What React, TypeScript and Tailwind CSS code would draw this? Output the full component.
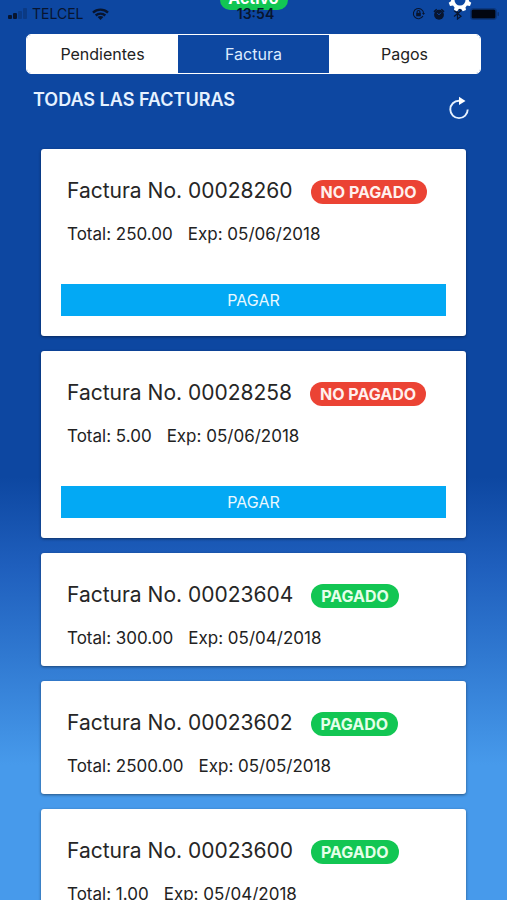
import { useState } from "react";

type Invoice = { id: string; total: string; exp: string; paid: boolean };

const invoices: Invoice[] = [
  { id: "00028260", total: "250.00", exp: "05/06/2018", paid: false },
  { id: "00028258", total: "5.00", exp: "05/06/2018", paid: false },
  { id: "00023604", total: "300.00", exp: "05/04/2018", paid: true },
  { id: "00023602", total: "2500.00", exp: "05/05/2018", paid: true },
  { id: "00023600", total: "1.00", exp: "05/04/2018", paid: true },
];

const tabs = ["Pendientes", "Factura", "Pagos"];

function WifiIcon() {
  return (
    <svg viewBox="0 0 17 12" className="h-3 w-[17px]" fill="none" stroke="currentColor" strokeWidth="2.4" aria-hidden="true">
      <path d="M1 4.600C5.200.6 11.800.6 16 4.600" />
      <path d="M3.700 7.500C6.400 5 10.600 5 13.300 7.500" />
      <path d="M5.600 9L8.500 12L11.400 9C9.800 7.600 7.200 7.600 5.600 9Z" fill="currentColor" stroke="none" />
    </svg>
  );
}

function GearIcon() {
  return (
    <svg viewBox="0 0 24 24" className="h-6 w-6" aria-hidden="true">
      <g fill="#fff">
        {[22.5, 67.5, 112.5, 157.5].map((angle) => (
          <path key={angle} d="M9.600 3.500L10.300 0.500H13.700L14.400 3.500V20.500L13.700 23.500H10.300L9.600 20.500Z" transform={`rotate(${angle} 12 12)`} />
        ))}
        <circle cx="12" cy="12" r="9" />
      </g>
      <circle cx="12" cy="12" r="5.500" fill="#0d47a1" />
    </svg>
  );
}

function StatusBar() {
  return (
    <div className="relative grid h-[27px] grid-cols-3 items-center pl-2 pr-2 text-sm leading-4 text-[#08152f]">
      <div className="flex items-center gap-1">
        <svg viewBox="0 0 20 11" className="h-[11px] w-5" fill="currentColor" aria-hidden="true">
          <rect x="0" y="7" width="4" height="4" rx="1" />
          <rect x="5" y="5" width="4" height="6" rx="1" />
          <rect x="10" y="3" width="4" height="8" rx="1" opacity=".25" />
          <rect x="15" y="0" width="4" height="11" rx="1" opacity=".25" />
        </svg>
        <span>TELCEL</span>
        <span className="pl-1"><WifiIcon /></span>
      </div>
      <span className="absolute left-1/2 top-0 flex h-[10px] w-[68px] -translate-x-1/2 items-end justify-center overflow-hidden rounded-b-full bg-[#12c653] text-base font-bold leading-6 text-white">
        Activo
      </span>
      <time className="relative col-start-2 pl-1 text-center font-semibold">13:54</time>
      <div className="relative flex items-center justify-end gap-2">
        <svg viewBox="0 0 14 14" className="h-[13px] w-[13px]" fill="none" stroke="currentColor" strokeWidth="1.200" aria-hidden="true">
          <path d="M11.800 9.800A5.500 5.500 0 1 1 12.500 7" />
          <path d="M10.800 6.500H14L12.400 8.700Z" fill="currentColor" stroke="none" />
          <rect x="4.500" y="6.300" width="5" height="3.700" fill="currentColor" stroke="none" />
          <path d="M5.500 6.500V5.200A1.500 1.500 0 0 1 8.500 5.200V6.500" />
        </svg>
        <svg viewBox="0 0 13 13" className="h-3 w-3" aria-hidden="true">
          <g fill="currentColor">
            <circle cx="6.500" cy="7.300" r="5.300" />
            <path d="M0.500 3.500L3.500 0.800L4.500 2L1.500 4.700ZM12.500 3.500L9.500 0.800L8.500 2L11.500 4.700Z" />
          </g>
          <path d="M4.500 5.500L6.500 7.500L8.700 5" fill="none" stroke="#0d47a1" />
        </svg>
        <svg viewBox="0 0 9 13" className="h-[13px] w-[9px]" fill="none" stroke="currentColor" strokeWidth="1.300" aria-hidden="true">
          <path d="M1 3.500L8 9.300L4.500 12V1L8 3.700L1 9.500" />
        </svg>
        <svg viewBox="0 0 29 12" className="h-3 w-[29px]" aria-hidden="true">
          <rect x="0.500" y="0.500" width="26" height="11" rx="2.500" fill="none" stroke="currentColor" opacity=".3" />
          <rect x="1.500" y="1.500" width="24" height="9" rx="1.500" fill="#020610" />
          <rect x="27.500" y="4" width="1.500" height="4" rx=".7" fill="currentColor" opacity=".4" />
        </svg>
      </div>
      <button type="button" aria-label="Ajustes" className="absolute -top-3 right-[35px]">
        <GearIcon />
      </button>
    </div>
  );
}

function InvoiceCard({ invoice }: { invoice: Invoice }) {
  return (
    <article
      className={`shrink-0 rounded-[3px] bg-white px-5 pt-7 shadow-[0_1px_3px_rgba(0,0,0,0.45)] ${invoice.paid ? "pb-4" : "pb-5"}`}
    >
      <div className="flex items-center gap-[18px] pl-[6px]">
        <h2 className="whitespace-nowrap text-[21px] leading-7 text-[#262626]">Factura No. {invoice.id}</h2>
        <span
          className={`mt-[2px] whitespace-nowrap rounded-full px-[10px] text-base font-bold leading-6 ${
            invoice.paid ? "bg-[#12c653] text-[#e4ffe9]" : "bg-[#eb4334] text-[#fff0ee]"
          }`}
        >
          {invoice.paid ? "PAGADO" : "NO PAGADO"}
        </span>
      </div>
      <p className="mt-[17px] flex gap-[15px] pl-[6px] text-[17px] leading-6 text-[#222]">
        <span>Total: {invoice.total}</span>
        <span>Exp: {invoice.exp}</span>
      </p>
      {!invoice.paid && (
        <button type="button" className="mt-[38px] h-8 w-full bg-[#03a9f4] text-base text-[#e9f8ff]">
          PAGAR
        </button>
      )}
    </article>
  );
}

export default function App() {
  const [active, setActive] = useState("Factura");
  return (
    <div className="flex h-screen flex-col overflow-hidden bg-[linear-gradient(to_bottom,#0d47a1_0%,#0d47a1_53%,#1f5fbd_63%,#3079d1_73%,#479aeb_85%,#479aeb_100%)] font-['Inter','Liberation_Sans',sans-serif]">
      <StatusBar />
      <nav className="mx-[26px] mt-[7px] flex h-10 shrink-0 overflow-hidden rounded-[5px] border border-white">
        {tabs.map((tab) => (
          <button
            key={tab}
            type="button"
            onClick={() => setActive(tab)}
            className={`flex-1 text-base ${active === tab ? "bg-[#0d47a1] text-[#dcebff]" : "bg-white text-[#222]"}`}
          >
            {tab}
          </button>
        ))}
      </nav>
      <header className="flex h-[60px] shrink-0 items-start justify-between pl-[33px] pr-[37px] pt-[14px]">
        <h1 className="text-lg font-semibold leading-6 text-[#e6f2ff]">TODAS LAS FACTURAS</h1>
        <button type="button" aria-label="Actualizar" className="mt-2">
          <svg viewBox="0 0 22 24" className="h-6 w-[22px]" fill="none" stroke="#e6f2ff" strokeWidth="1.900" aria-hidden="true">
            <path d="M13 4.700H11A8.700 8.700 0 1 0 19.700 13.400" />
            <path d="M11 .8L17.500 4.900L11 9Z" fill="#fff" stroke="none" />
          </svg>
        </button>
      </header>
      <main className="flex min-h-0 flex-1 flex-col gap-[15px] overflow-y-auto px-[41px] pb-[15px] pt-[15px] [scrollbar-width:none]">
        {invoices.map((invoice) => (
          <InvoiceCard key={invoice.id} invoice={invoice} />
        ))}
      </main>
    </div>
  );
}
